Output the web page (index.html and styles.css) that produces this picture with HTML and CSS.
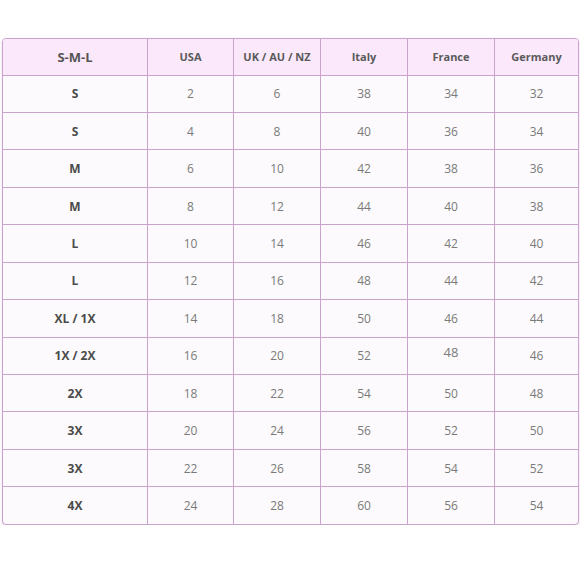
FILE: index.html
```html
<!DOCTYPE html>
<html>
<head>
<meta charset="utf-8">
<link rel="stylesheet" href="styles.css">
</head>
<body>
<div class="wrap">
<table class="chart">
<colgroup>
<col class="c1"><col class="c2"><col class="c3"><col class="c4"><col class="c5"><col class="c6">
</colgroup>
<thead>
<tr><th class="first">S-M-L</th><th>USA</th><th>UK / AU / NZ</th><th>Italy</th><th>France</th><th>Germany</th></tr>
</thead>
<tbody>
<tr><td class="size">S</td><td>2</td><td>6</td><td>38</td><td>34</td><td>32</td></tr>
<tr><td class="size">S</td><td>4</td><td>8</td><td>40</td><td>36</td><td>34</td></tr>
<tr><td class="size">M</td><td>6</td><td>10</td><td>42</td><td>38</td><td>36</td></tr>
<tr><td class="size">M</td><td>8</td><td>12</td><td>44</td><td>40</td><td>38</td></tr>
<tr><td class="size">L</td><td>10</td><td>14</td><td>46</td><td>42</td><td>40</td></tr>
<tr><td class="size">L</td><td>12</td><td>16</td><td>48</td><td>44</td><td>42</td></tr>
<tr><td class="size">XL / 1X</td><td>14</td><td>18</td><td>50</td><td>46</td><td>44</td></tr>
<tr><td class="size">1X / 2X</td><td>16</td><td>20</td><td>52</td><td><span class="raised">48</span></td><td>46</td></tr>
<tr><td class="size">2X</td><td>18</td><td>22</td><td>54</td><td>50</td><td>48</td></tr>
<tr><td class="size">3X</td><td>20</td><td>24</td><td>56</td><td>52</td><td>50</td></tr>
<tr><td class="size">3X</td><td>22</td><td>26</td><td>58</td><td>54</td><td>52</td></tr>
<tr><td class="size">4X</td><td>24</td><td>28</td><td>60</td><td>56</td><td>54</td></tr>
</tbody>
</table>
</div>
</body>
</html>
```
FILE: styles.css
```css
html, body {
  margin: 0;
  padding: 0;
  background: #ffffff;
}
body {
  font-family: "Open Sans", "DejaVu Sans", sans-serif;
}
.wrap {
  padding: 38px 3px 0 2px;
}
.chart {
  width: 576px;
  border-collapse: separate;
  border-spacing: 0;
  table-layout: fixed;
  border: 1px solid #c9a3cc;
  border-radius: 4px;
  background: #fcfafc;
  box-shadow: 0 1px 3px rgba(180, 150, 185, 0.35);
}
.c1 { width: 145px; }
.c2 { width: 86px; }
.c3 { width: 87px; }
.c4 { width: 87px; }
.c5 { width: 87px; }
.c6 { width: 83px; }
.chart th, .chart td {
  height: 36.45px;
  padding: 0;
  text-align: center;
  vertical-align: middle;
  border-right: 1px solid #c9a3cc;
  border-bottom: 1px solid #c9a3cc;
}
.chart th:last-child, .chart td:last-child {
  border-right: none;
}
.chart tbody tr:last-child td {
  border-bottom: none;
}
.chart thead th {
  height: 35.5px;
  background: #fbe8fb;
  color: #5a5a5a;
  font-size: 11px;
  font-weight: 700;
}
.chart thead th:first-child { border-top-left-radius: 3px; }
.chart thead th:last-child { border-top-right-radius: 3px; }
.chart thead th.first {
  font-size: 13px;
  color: #555;
}
.chart td {
  color: #7a7a7a;
  font-size: 12px;
}
.chart td.size {
  color: #4a4a4a;
  font-weight: 700;
  font-size: 12px;
}
.raised {
  position: relative;
  top: -4px;
  font-size: 13px;
}
```
